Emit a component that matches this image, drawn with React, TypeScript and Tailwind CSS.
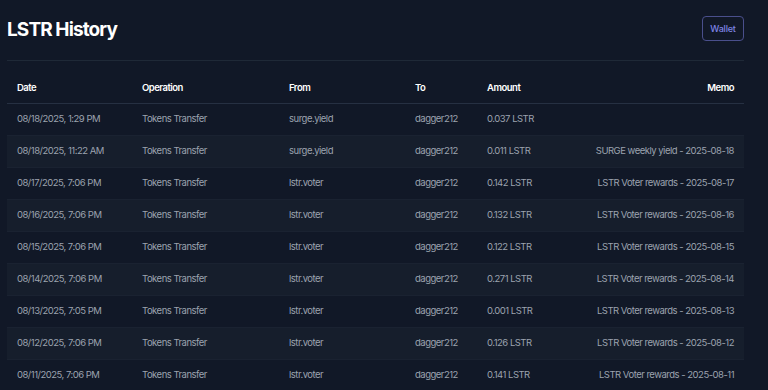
import React from 'react';

interface HistoryRow {
  date: string;
  from: string;
  amount: string;
  memo: string;
}

const rows: HistoryRow[] = [
  { date: '08/18/2025, 1:29 PM', from: 'surge.yield', amount: '0.037 LSTR', memo: '' },
  { date: '08/18/2025, 11:22 AM', from: 'surge.yield', amount: '0.011 LSTR', memo: 'SURGE weekly yield - 2025-08-18' },
  { date: '08/17/2025, 7:06 PM', from: 'lstr.voter', amount: '0.142 LSTR', memo: 'LSTR Voter rewards - 2025-08-17' },
  { date: '08/16/2025, 7:06 PM', from: 'lstr.voter', amount: '0.132 LSTR', memo: 'LSTR Voter rewards - 2025-08-16' },
  { date: '08/15/2025, 7:06 PM', from: 'lstr.voter', amount: '0.122 LSTR', memo: 'LSTR Voter rewards - 2025-08-15' },
  { date: '08/14/2025, 7:06 PM', from: 'lstr.voter', amount: '0.271 LSTR', memo: 'LSTR Voter rewards - 2025-08-14' },
  { date: '08/13/2025, 7:05 PM', from: 'lstr.voter', amount: '0.001 LSTR', memo: 'LSTR Voter rewards - 2025-08-13' },
  { date: '08/12/2025, 7:06 PM', from: 'lstr.voter', amount: '0.126 LSTR', memo: 'LSTR Voter rewards - 2025-08-12' },
  { date: '08/11/2025, 7:06 PM', from: 'lstr.voter', amount: '0.141 LSTR', memo: 'LSTR Voter rewards - 2025-08-11' },
];

export default function App() {
  return (
    <div className="h-[390px] overflow-hidden bg-[#111827] font-['Inter',sans-serif]">
      <div className="w-[737px] ml-[7px]">
        <div className="flex items-center justify-between h-[61px] border-b border-[#1f2937]">
          <h1 className="text-[19px] font-bold text-white tracking-[-0.9px]">LSTR History</h1>
          <button className="h-[25px] w-[42px] rounded-[4px] border border-[#4a4f8c] text-[9px] font-medium text-[#7f84e6] tracking-[-0.2px] mb-[3px]">
            Wallet
          </button>
        </div>

        <table className="w-full table-fixed border-collapse text-[9.5px] tracking-[-0.5px]">
          <thead>
            <tr className="h-[42px] border-b border-[#263042]">
              <th className="pl-[10px] pt-[12px] text-left font-semibold text-white w-[135px]">Date</th>
              <th className="pt-[12px] text-left font-semibold text-white w-[147px]">Operation</th>
              <th className="pt-[12px] text-left font-semibold text-white w-[126px]">From</th>
              <th className="pt-[12px] text-left font-semibold text-white w-[72px]">To</th>
              <th className="pt-[12px] text-left font-semibold text-white w-[90px]">Amount</th>
              <th className="pr-[10px] pt-[12px] text-right font-semibold text-white">Memo</th>
            </tr>
          </thead>
          <tbody>
            {rows.map((row, idx) => (
              <tr
                key={row.date}
                className={`h-[32px] border-b border-[#1a2231] text-[#9ca3af] whitespace-nowrap ${idx % 2 === 1 ? 'bg-[#161e2c]' : ''}`}
              >
                <td className="pl-[10px]">{row.date}</td>
                <td>Tokens Transfer</td>
                <td>{row.from}</td>
                <td>dagger212</td>
                <td>{row.amount}</td>
                <td className="pr-[10px] text-right">{row.memo}</td>
              </tr>
            ))}
          </tbody>
        </table>
      </div>
    </div>
  );
}
